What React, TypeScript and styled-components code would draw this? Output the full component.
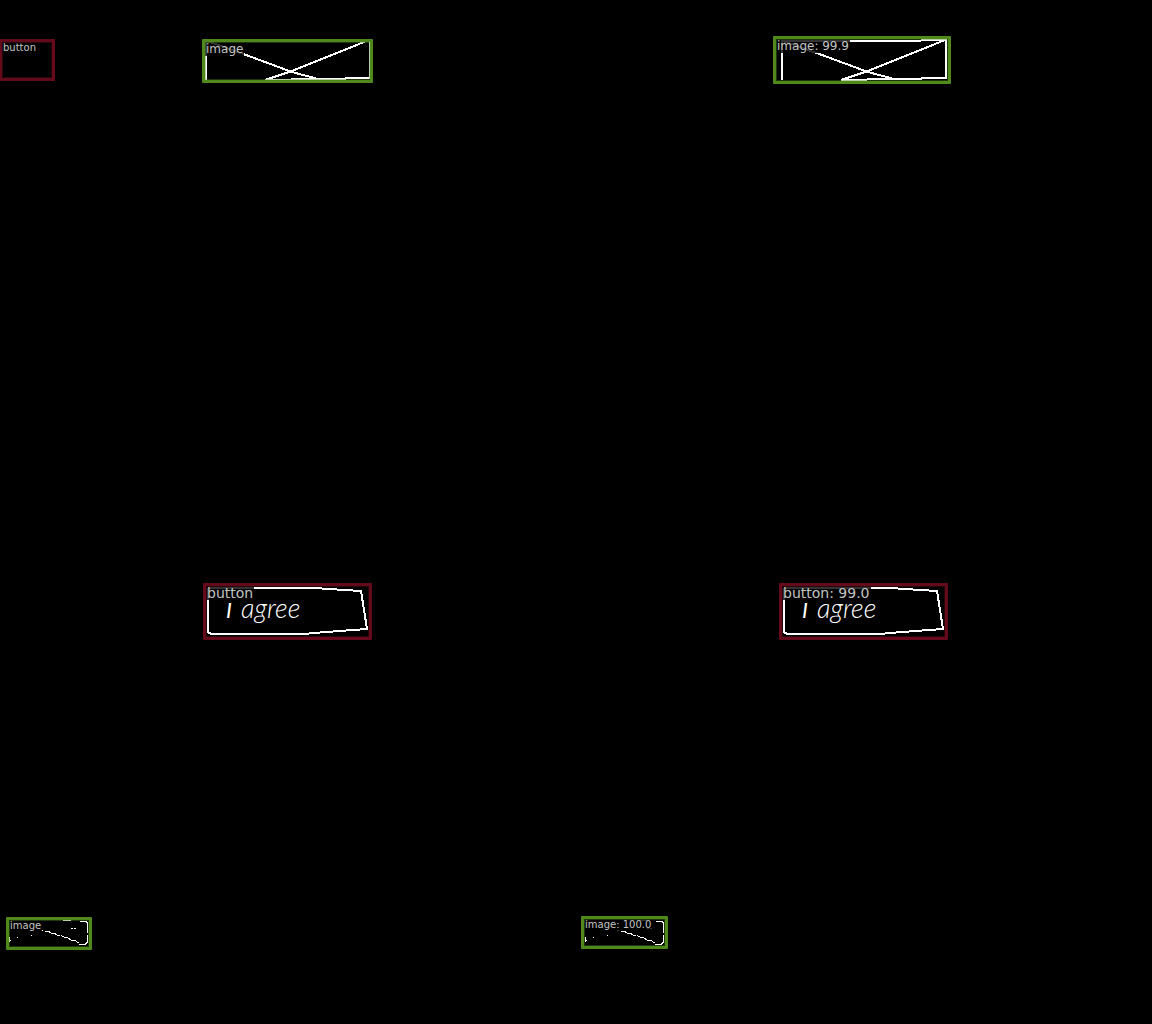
import React from "react";
import styled, { createGlobalStyle } from "styled-components";

type Kind = "button" | "image";

interface Detection {
  kind: Kind;
  score?: string;
  x: number;
  y: number;
  w: number;
  h: number;
  size: number;
}

const colors: Record<Kind, string> = { button: "#640a1b", image: "#4f881b" };

const truth: Detection[] = [
  { kind: "button", x: -1, y: 39, w: 56, h: 42, size: 10 },
  { kind: "image", x: 202, y: 39, w: 171, h: 44, size: 12 },
  { kind: "button", x: 203, y: 583, w: 169, h: 57, size: 14 },
  { kind: "image", x: 6, y: 917, w: 86, h: 33, size: 10 },
];

const predicted: Detection[] = [
  { kind: "image", score: "99.9", x: 197, y: 36, w: 178, h: 48, size: 12 },
  { kind: "button", score: "99.0", x: 203, y: 583, w: 169, h: 57, size: 14 },
  { kind: "image", score: "100.0", x: 5, y: 916, w: 87, h: 33, size: 10 },
];

const GlobalStyle = createGlobalStyle`
  body {
    margin: 0;
    background: #000;
    font-family: "DejaVu Sans", sans-serif;
  }
`;

const Comparison = styled.main`
  display: grid;
  grid-template-columns: repeat(2, minmax(0, 1fr));
  min-height: 100vh;
  background: #000;
`;

const Canvas = styled.section`
  position: relative;
  overflow: hidden;
`;

const Drawing = styled.svg`
  display: block;
  fill: none;
  stroke: #fff;
  stroke-width: 2;
  shape-rendering: crispEdges;
`;

const Thin = styled.g`
  stroke-width: 1;
`;

const Handwriting = styled.text`
  fill: #fff;
  stroke: none;
  font: italic 300 27px Lato, sans-serif;
`;

const Capital = styled.tspan`
  font-size: 22px;
  font-weight: 400;
`;

const Box = styled.figure<{ $item: Detection }>`
  position: absolute;
  box-sizing: border-box;
  margin: 0;
  left: ${(p) => p.$item.x}px;
  top: ${(p) => p.$item.y}px;
  width: ${(p) => p.$item.w}px;
  height: ${(p) => p.$item.h}px;
  border: 3px solid ${(p) => colors[p.$item.kind]};
  outline: 1px solid ${(p) => colors[p.$item.kind]}66;
  outline-offset: -4px;
  border-radius: 1px;
`;

const Label = styled.figcaption<{ $size: number }>`
  width: max-content;
  padding: 0 1px;
  background: rgba(0, 0, 0, 0.8);
  color: #c4c4c4;
  font-size: ${(p) => p.$size}px;
  line-height: ${(p) => (p.$size > 10 ? 14 : 12)}px;
`;

function Sketch() {
  return (
    <Drawing width="576" height="1024" viewBox="0 0 576 1024" aria-hidden="true">
      <path d="M206 80L206 56L206 41L320 41L370 40L370 79" />
      <path d="M207 41L246 55L292 72L318 79L345 79L346 78H370M369 40L292 71L265 80L318 79" />
      <path d="M208 588L208 632L211 634L304 634L326 632L367 629L361 591L344 590L315 588L208 588" />
      <Handwriting y="618">
        <Capital x="226">I</Capital>
        <tspan x="241">agree</tspan>
      </Handwriting>
      <Thin>
        <path d="M41 930.5H43M45 931.5H49L51 933H54L57 935H60" />
        <path d="M61 935.5L64 937H67L71 940H74L79 943" />
        <path d="M79 944.5H85L87.5 942V935M87.5 933V923L86 921.5H80" />
        <path d="M63 920.5H71M71 928.5H73M74 928.5H76M9.5 937V942M10 940.5H11M17 937.5H18M31 935.5H32" />
      </Thin>
    </Drawing>
  );
}

function Panel({ name, items }: { name: string; items: Detection[] }) {
  return (
    <Canvas aria-label={name}>
      <Sketch />
      {items.map((item) => (
        <Box key={`${item.kind}-${item.x}-${item.y}`} $item={item}>
          <Label $size={item.size}>
            {item.score ? `${item.kind}: ${item.score}` : item.kind}
          </Label>
        </Box>
      ))}
    </Canvas>
  );
}

export default function App() {
  return (
    <>
      <GlobalStyle />
      <Comparison>
        <Panel name="Ground truth" items={truth} />
        <Panel name="Predictions" items={predicted} />
      </Comparison>
    </>
  );
}
